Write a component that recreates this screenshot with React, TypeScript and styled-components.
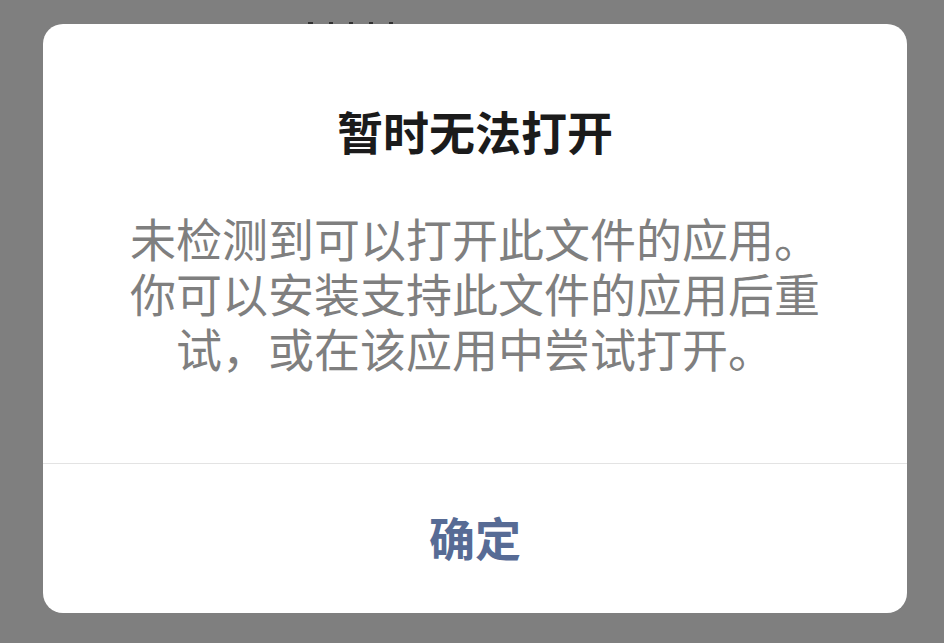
import React from "react";
import styled, { createGlobalStyle } from "styled-components";

const Global = createGlobalStyle`
  html, body {
    margin: 0;
    padding: 0;
    background: #7f7f7f;
  }
  body {
    font-family: "Noto Sans CJK SC", "Noto Sans", sans-serif;
  }
`;

const Page = styled.div`
  position: relative;
  width: 944px;
  height: 643px;
  box-sizing: border-box;
  padding: 24px 37px 30px 43px;
  background: #7f7f7f;
  overflow: hidden;
`;

const Peek = styled.div`
  position: absolute;
  left: 308px;
  top: 21px;
  width: 170px;
  height: 3px;
  overflow: hidden;
  display: flex;
  gap: 16px;
  align-items: flex-end;
`;

const PeekMark = styled.span<{ $w: number }>`
  display: block;
  width: ${(p) => p.$w}px;
  height: 2px;
  background: #333333;
`;

const Dialog = styled.div`
  position: relative;
  width: 864px;
  height: 589px;
  background: #ffffff;
  border-radius: 20px;
  display: flex;
  flex-direction: column;
  overflow: hidden;
`;

const Content = styled.div`
  height: 439px;
  box-sizing: border-box;
  padding: 78px 60px 0;
  display: flex;
  flex-direction: column;
  align-items: center;
`;

const Title = styled.div`
  font-size: 46px;
  line-height: 56px;
  font-weight: 700;
  color: #1b1b1b;
  text-align: center;
`;

const Body = styled.div`
  margin-top: 52px;
  width: 712px;
  font-size: 46px;
  line-height: 55px;
  color: #7f7f7f;
  text-align: center;
`;

const Footer = styled.div`
  flex: 1;
  box-sizing: border-box;
  padding-bottom: 6px;
  border-top: 1px solid #e3e3e3;
  display: flex;
  align-items: center;
  justify-content: center;
`;

const Button = styled.button`
  border: none;
  background: transparent;
  padding: 0;
  font-family: "Noto Sans CJK SC", "Noto Sans", sans-serif;
  font-size: 46px;
  line-height: 56px;
  font-weight: 700;
  color: #576b95;
  cursor: pointer;
`;

export default function App() {
  return (
    <>
      <Global />
      <Page>
        <Peek>
          <PeekMark $w={5} />
          <PeekMark $w={4} />
          <PeekMark $w={4} />
          <PeekMark $w={4} />
          <PeekMark $w={4} />
        </Peek>
        <Dialog>
          <Content>
            <Title>暂时无法打开</Title>
            <Body>
              未检测到可以打开此文件的应用。你可以安装支持此文件的应用后重试，或在该应用中尝试打开。
            </Body>
          </Content>
          <Footer>
            <Button>确定</Button>
          </Footer>
        </Dialog>
      </Page>
    </>
  );
}
